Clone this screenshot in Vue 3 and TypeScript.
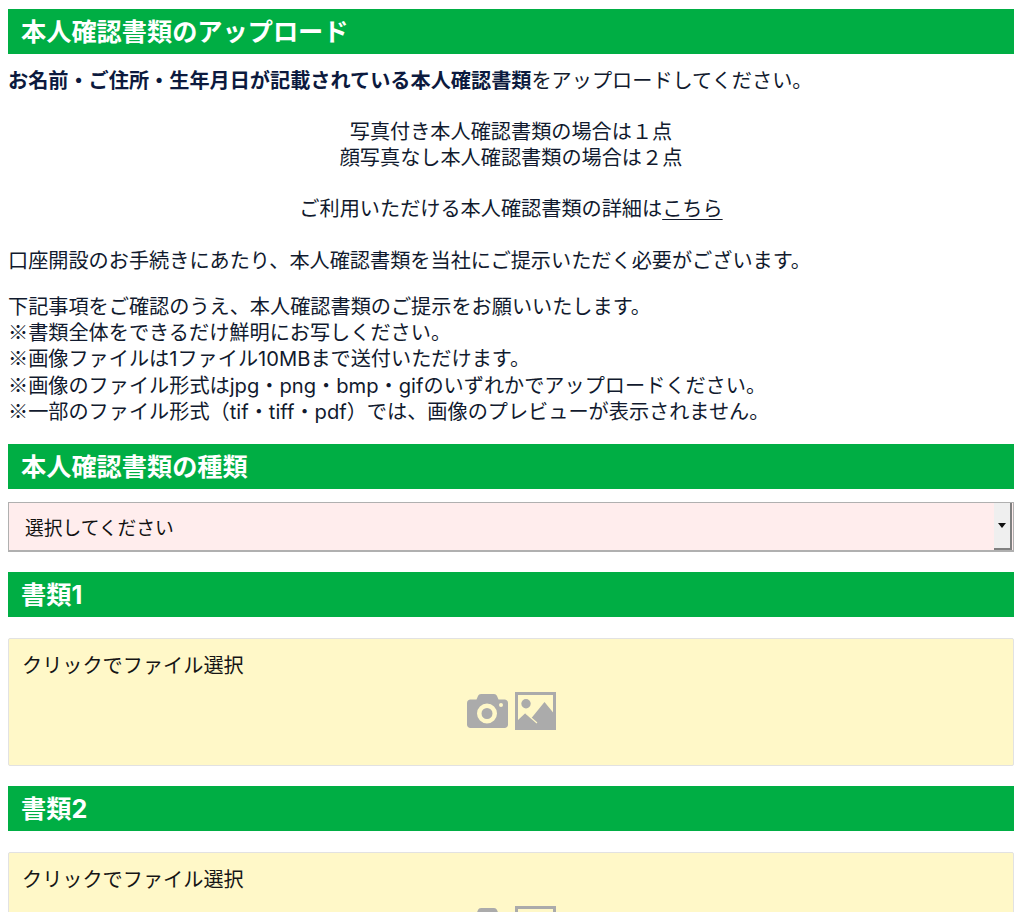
<script setup lang="ts">
interface Note { mark: string; text: string }
const notes: Note[] = [
  { mark: '', text: '下記事項をご確認のうえ、本人確認書類のご提示をお願いいたします。' },
  { mark: '※', text: '書類全体をできるだけ鮮明にお写しください。' },
  { mark: '※', text: '画像ファイルは1ファイル10MBまで送付いただけます。' },
  { mark: '※', text: '画像のファイル形式はjpg・png・bmp・gifのいずれかでアップロードください。' },
  { mark: '※', text: '一部のファイル形式（tif・tiff・pdf）では、画像のプレビューが表示されません。' },
]
const docs: string[] = ['書類1', '書類2']
</script>

<template>
  <main class="page">
    <h2 class="bar first">本人確認書類のアップロード</h2>
    <p class="lead"><strong>お名前・ご住所・生年月日が記載されている本人確認書類</strong>をアップロードしてください。</p>
    <div class="center count">
      <div>写真付き本人確認書類の場合は１点</div>
      <div>顔写真なし本人確認書類の場合は２点</div>
    </div>
    <p class="center detail">ご利用いただける本人確認書類の詳細は<a class="link">こちら</a></p>
    <p class="need">口座開設のお手続きにあたり、本人確認書類を当社にご提示いただく必要がございます。</p>
    <div class="notes">
      <div v-for="n in notes" :key="n.text"><span class="mark">{{ n.mark }}</span>{{ n.text }}</div>
    </div>
    <h2 class="bar kind">本人確認書類の種類</h2>
    <div class="select">
      <span class="select-label">選択してください</span>
      <span class="select-btn"><i class="arrow"></i></span>
    </div>
    <section v-for="d in docs" :key="d" class="doc">
      <h2 class="bar">{{ d }}</h2>
      <div class="drop">
        <div class="drop-label">クリックでファイル選択</div>
        <div class="icons">
          <svg class="cam" viewBox="0 0 41 34" aria-hidden="true">
            <path fill-rule="evenodd" d="M3.500 5.500H9.500L11 2c.5-1.200 1.600-2 3-2h13c1.400 0 2.500.8 3 2l1.500 3.500h6c2 0 3.500 1.500 3.500 3.500v21.500c0 2-1.500 3.500-3.500 3.500H3.500C1.500 34 0 32.500 0 30.500V9c0-2 1.500-3.500 3.500-3.500ZM20 9.500a10 10 0 1 0 0 20a10 10 0 0 0 0-20Zm0 4.500a5.500 5.500 0 1 1 0 11a5.500 5.500 0 0 1 0-11ZM34 9a2 2 0 1 0 0 4a2 2 0 0 0 0-4Z" />
          </svg>
          <svg class="pic" viewBox="0 0 41 38" aria-hidden="true">
            <path fill-rule="evenodd" d="M0 0h41v38H0ZM3 3v32h35V3Z" />
            <circle cx="11" cy="11.700" r="4.700" />
            <path d="M3 35.500V28l7.500-7 6 5L29.500 10l9 11v14.500Z" />
            <path class="slash" d="M10.500 21L22 31" />
          </svg>
        </div>
      </div>
    </section>
  </main>
</template>

<style scoped>
.page {
  box-sizing: border-box;
  width: 1024px;
  padding: 9px 10px 0 8px;
  font-family: Inter, "Noto Sans CJK JP", sans-serif;
  font-size: 20.160px;
  line-height: 26.200px;
  color: #111a2e;
}
.bar {
  margin: 0;
  height: 45px;
  padding-left: 13px;
  background: #00ae44;
  color: #fff;
  font-size: 25.200px;
  font-weight: 700;
  line-height: 46px;
}
p { margin: 0; }
strong { font-weight: 700; color: #0c1a3e; }
.center { text-align: center; }
.mark { font-family: "Noto Sans CJK JP", sans-serif; line-height: 0; }
.lead { margin-top: 14px; }
.count { margin-top: 25px; }
.detail { margin-top: 24px; }
.link { text-decoration: underline; text-underline-offset: 3px; text-decoration-thickness: 1px; }
.need { margin-top: 26px; }
.notes { margin-top: 20px; }
.kind { margin-top: 19px; }
.select {
  box-sizing: border-box;
  display: flex;
  align-items: stretch;
  justify-content: space-between;
  height: 50px;
  margin-top: 13px;
  background: #ffeded;
  border: 1px solid #b0b0b0;
  border-bottom-width: 2px;
  padding-right: 1px;
  color: #111;
}
.select-label {
  padding-left: 16px;
  font-size: 18.750px;
  line-height: 52px;
}
.select-btn {
  display: flex;
  align-items: center;
  justify-content: center;
  width: 16px;
  background: #efefef;
  border-right: 2px solid #808080;
  border-bottom: 2px solid #808080;
}
.arrow {
  width: 0;
  height: 0;
  border-left: 4px solid transparent;
  border-right: 4px solid transparent;
  border-top: 5px solid #111;
}
.doc { margin-top: 20px; }
.drop {
  box-sizing: border-box;
  height: 128px;
  margin-top: 21px;
  padding: 14px 13px;
  background: #fff8c8;
  border: 1px solid #e2e2e2;
  border-radius: 2px;
  color: #151515;
}
.icons {
  display: flex;
  justify-content: center;
  align-items: center;
  gap: 7px;
  margin-top: 13px;
}
.cam { width: 41px; height: 34px; fill: #ababab; }
.pic { width: 41px; height: 38px; fill: #ababab; }
.slash { fill: none; stroke: #fff8c8; stroke-width: 1.200px; }
</style>

<style>
html, body { margin: 0; height: 912px; overflow: hidden; background: #fff; }
</style>
